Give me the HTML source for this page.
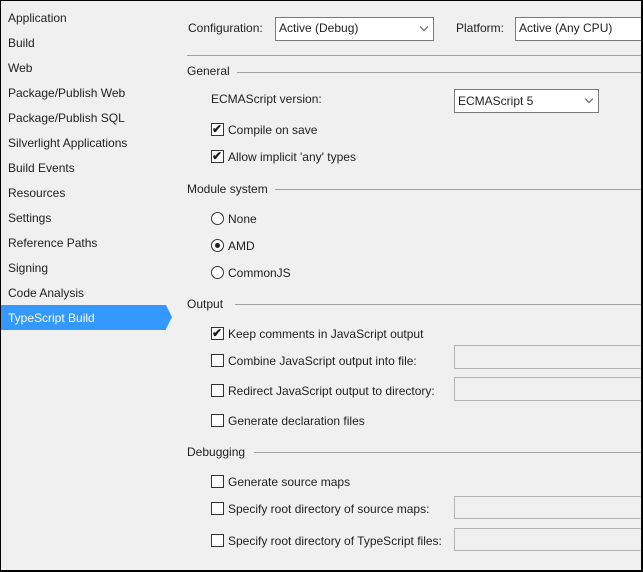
<!DOCTYPE html>
<html><head><meta charset="utf-8"><style>
*{margin:0;padding:0;box-sizing:border-box}
body{width:643px;height:572px;background:#000;font-family:"Liberation Sans",sans-serif;font-size:12px;color:#1e1e1e;position:relative;overflow:hidden}
#bg{position:absolute;left:1px;top:1px;width:640px;height:569px;background:#f0f0f0;overflow:hidden}
.t{position:absolute;white-space:nowrap;line-height:14px}
.nav{left:7px}
.sel{position:absolute;left:0;top:304px;width:165px;height:25px;background:#3399ff}
.arr{position:absolute;left:165px;top:304px;width:0;height:0;border-top:12.5px solid transparent;border-bottom:12.5px solid transparent;border-left:6px solid #3399ff}
.box{position:absolute;background:#fff;border:1px solid #7a7a7a}
.tb{position:absolute;border:1px solid #b4b4b4;background:#f0f0f0}
.line{position:absolute;height:1px;background:#a0a0a0}
.cb{position:absolute;width:13px;height:13px;border:1px solid #333;background:#fff}
.rb{position:absolute;width:13px;height:13px;border:1px solid #333;border-radius:50%;background:#fff}
.chev{position:absolute;width:6px;height:6px;border-right:1.3px solid #555;border-bottom:1.3px solid #555;transform:rotate(45deg)}
</style></head><body><div id="bg">
<div class="sel"></div><div class="arr"></div>
<div class="t nav" style="top:10px">Application</div>
<div class="t nav" style="top:35px">Build</div>
<div class="t nav" style="top:60px">Web</div>
<div class="t nav" style="top:85px">Package/Publish Web</div>
<div class="t nav" style="top:110px">Package/Publish SQL</div>
<div class="t nav" style="top:135px">Silverlight Applications</div>
<div class="t nav" style="top:160px">Build Events</div>
<div class="t nav" style="top:185px">Resources</div>
<div class="t nav" style="top:210px">Settings</div>
<div class="t nav" style="top:235px">Reference Paths</div>
<div class="t nav" style="top:260px">Signing</div>
<div class="t nav" style="top:285px">Code Analysis</div>
<div class="t nav" style="top:310px;color:#fff">TypeScript Build</div>

<div class="t" style="left:187px;top:20px">Configuration:</div>
<div class="box" style="left:274px;top:16px;width:159px;height:24px"></div>
<div class="t" style="left:278px;top:20px">Active (Debug)</div>
<div class="chev" style="left:420px;top:23px"></div>
<div class="t" style="left:455px;top:20px">Platform:</div>
<div class="box" style="left:514px;top:16px;width:140px;height:24px"></div>
<div class="t" style="left:518px;top:20px">Active (Any CPU)</div>
<div class="line" style="left:186px;top:54px;width:460px"></div>

<div class="t" style="left:186px;top:63px">General</div>
<div class="line" style="left:236px;top:71px;width:410px"></div>
<div class="t" style="left:210px;top:91px">ECMAScript version:</div>
<div class="box" style="left:453px;top:88px;width:145px;height:24px"></div>
<div class="t" style="left:457px;top:93px">ECMAScript 5</div>
<div class="chev" style="left:585px;top:95px"></div>
<div class="cb" style="left:210px;top:122px"></div><div class="t" style="left:211px;top:121px;font-size:12px;font-weight:bold">✔</div>
<div class="t" style="left:227px;top:122px">Compile on save</div>
<div class="cb" style="left:210px;top:149px"></div><div class="t" style="left:211px;top:148px;font-weight:bold">✔</div>
<div class="t" style="left:227px;top:149px">Allow implicit 'any' types</div>

<div class="t" style="left:186px;top:181px">Module system</div>
<div class="line" style="left:274px;top:188px;width:372px"></div>
<div class="rb" style="left:210px;top:211px"></div>
<div class="t" style="left:227px;top:211px">None</div>
<div class="rb" style="left:210px;top:238px"></div><div style="position:absolute;left:214px;top:242px;width:5px;height:5px;border-radius:50%;background:#222"></div>
<div class="t" style="left:227px;top:238px">AMD</div>
<div class="rb" style="left:210px;top:265px"></div>
<div class="t" style="left:227px;top:265px">CommonJS</div>

<div class="t" style="left:186px;top:296px">Output</div>
<div class="line" style="left:234px;top:303px;width:412px"></div>
<div class="cb" style="left:210px;top:326px"></div><div class="t" style="left:211px;top:325px;font-weight:bold">✔</div>
<div class="t" style="left:227px;top:326px">Keep comments in JavaScript output</div>
<div class="cb" style="left:210px;top:353px"></div>
<div class="t" style="left:227px;top:353px">Combine JavaScript output into file:</div>
<div class="tb" style="left:453px;top:344px;width:200px;height:24px"></div>
<div class="cb" style="left:210px;top:383px"></div>
<div class="t" style="left:227px;top:383px">Redirect JavaScript output to directory:</div>
<div class="tb" style="left:453px;top:376px;width:200px;height:24px"></div>
<div class="cb" style="left:210px;top:413px"></div>
<div class="t" style="left:227px;top:413px">Generate declaration files</div>

<div class="t" style="left:186px;top:444px">Debugging</div>
<div class="line" style="left:253px;top:451px;width:393px"></div>
<div class="cb" style="left:210px;top:474px"></div>
<div class="t" style="left:227px;top:474px">Generate source maps</div>
<div class="cb" style="left:210px;top:501px"></div>
<div class="t" style="left:227px;top:501px">Specify root directory of source maps:</div>
<div class="tb" style="left:453px;top:495px;width:200px;height:23px"></div>
<div class="cb" style="left:210px;top:533px"></div>
<div class="t" style="left:227px;top:533px">Specify root directory of TypeScript files:</div>
<div class="tb" style="left:453px;top:527px;width:200px;height:23px"></div>
</div></body></html>
